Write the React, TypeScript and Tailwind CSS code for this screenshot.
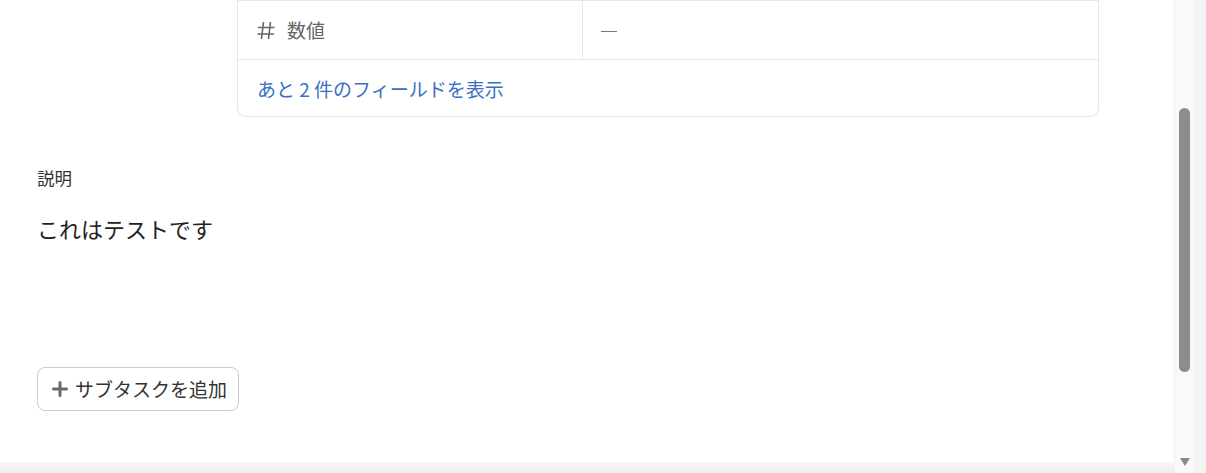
import React from "react";

const font = { fontFamily: '"Noto Sans CJK JP", "Noto Sans", sans-serif' };

export default function App() {
  return (
    <div className="w-[1206px] h-[473px] bg-white flex overflow-hidden" style={font}>
      <div className="flex-1 flex flex-col">
        <div className="flex-1 flex flex-col pl-[37px]">
          <div className="ml-[200px] w-[862px] border border-t-0 border-[#e6e6e6] rounded-b-[9px] flex flex-col">
            <div className="flex h-[60px] border-t border-b border-[#e6e6e6]">
              <div className="w-[345px] border-r border-[#e6e6e6] flex items-center pl-[19px] text-[#666] text-[19px]">
                <svg width="18" height="19" viewBox="0 0 18 19" className="mr-[12px] mt-[1px]">
                  <path d="M6.5 1L4.5 18M13.5 1L11.5 18M1 6.5h16.5M0.5 13h16.5" stroke="#666" strokeWidth="1.6" fill="none" />
                </svg>
                <span>数値</span>
              </div>
              <div className="flex-1 flex items-center pl-[18px]">
                <div className="w-[16px] h-[1px] bg-[#777] mt-[3px]" />
              </div>
            </div>
            <div className="h-[56px] flex items-center pl-[19px] pt-[3px] text-[19px] text-[#3a6fc4]">
              あと 2 件のフィールドを表示
            </div>
          </div>
          <div className="mt-[49px] text-[17.5px] text-[#333] leading-[24px]">説明</div>
          <div className="mt-[23px] text-[22px] text-[#222] leading-[30px]">これはテストです</div>
          <div className="mt-[124px]">
            <button className="h-[44px] w-[202px] border border-[#cccccc] rounded-[8px] flex items-center pl-[14px] text-[19px] text-[#333] bg-white">
              <svg width="16" height="16" viewBox="0 0 16 16" className="mr-[7px]">
                <path d="M8 1.5v13M1.5 8h13" stroke="#6a6a6a" strokeWidth="3" strokeLinecap="round" />
              </svg>
              サブタスクを追加
            </button>
          </div>
        </div>
        <div className="h-[11px] bg-gradient-to-b from-[#f7f7f7] to-[#ededed]" />
      </div>
      <div className="w-[19px] bg-[#f9f9f9] border-l border-[#f0f0f0] flex flex-col items-center relative">
        <div className="mt-[108px] w-[11px] h-[264px] rounded-full bg-[#8c8c8c]" />
        <div className="absolute bottom-[7px] left-[5px] w-0 h-0 border-l-[5px] border-r-[5px] border-t-[8px] border-l-transparent border-r-transparent border-t-[#8a8a8a]" />
      </div>
      <div className="w-[13px] bg-[#f3f3f3]" />
    </div>
  );
}
